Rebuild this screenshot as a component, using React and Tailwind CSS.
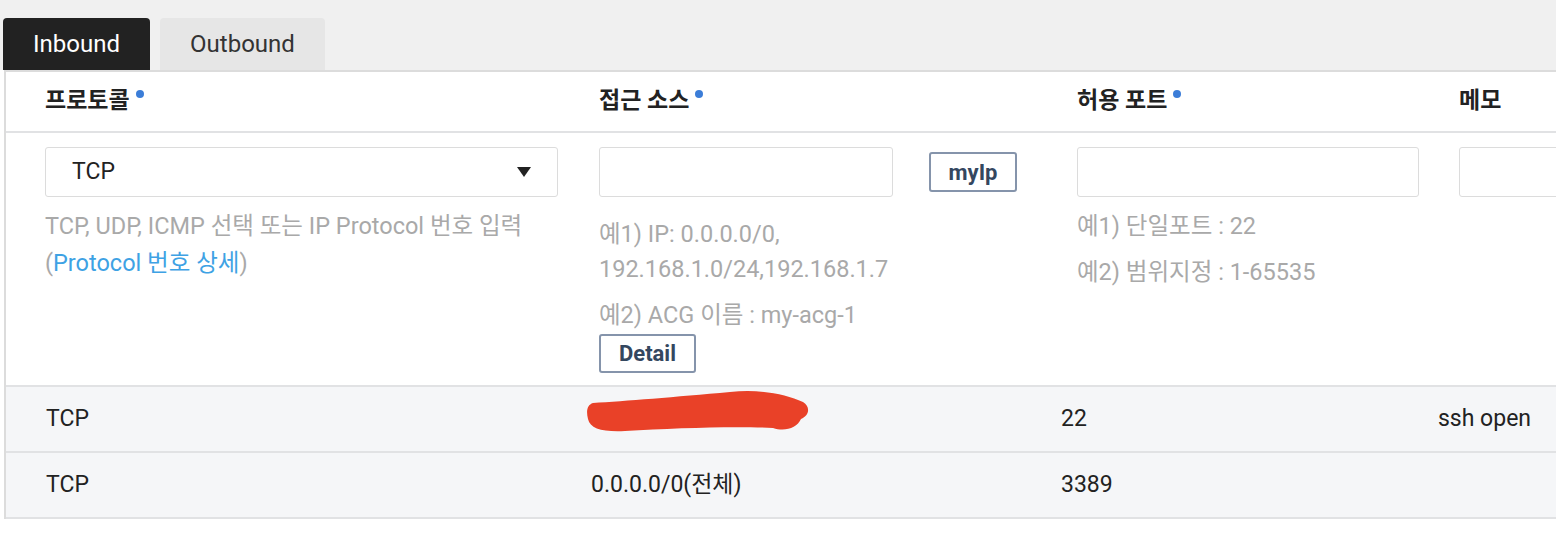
import React from "react";

const FONT = { fontFamily: "Roboto, 'Noto Sans CJK KR', sans-serif" };

function Dot() {
  return <span className="ml-[6px] mt-[-15px] inline-block h-2 w-2 rounded-full bg-[#3b7dd8]" />;
}

function HeadCell({ children, dot }) {
  return (
    <div className="flex items-center text-[23px] font-bold text-[#222]">
      <span>{children}</span>
      {dot && <Dot />}
    </div>
  );
}

function Input({ className = "" }) {
  return <div className={`h-[50px] rounded-[3px] border border-[#dcdcdc] bg-white ${className}`} />;
}

function OutlineButton({ children, className = "" }) {
  return (
    <button className={`rounded-[3px] border-2 border-[#8594ab] bg-white text-[22px] font-bold text-[#34475f] ${className}`}>
      {children}
    </button>
  );
}

function Scribble() {
  return (
    <svg className="absolute left-[-6px] top-[2px]" width="226" height="46" viewBox="0 0 226 46">
      <path
        d="M8 14 C 40 12, 90 8, 145 3 C 175 0, 200 5, 218 13 C 226 18, 224 27, 216 30 C 212 39, 200 43, 188 39 C 150 37, 90 39, 40 42 C 18 43, 5 40, 3 30 C 1 22, 2 16, 8 14 Z"
        fill="#e94128"
      />
    </svg>
  );
}

function DataRow({ proto, source, port, memo, hidden }) {
  return (
    <div className="grid h-[66px] grid-cols-[545px_470px_377px_1fr] items-center border-b-2 border-[#e1e2e4] bg-[#f5f6f8] pl-[40px] text-[23px] text-[#222]">
      <div>{proto}</div>
      <div className="relative h-full">
        {hidden ? <Scribble /> : <div className="flex h-full items-center">{source}</div>}
      </div>
      <div>{port}</div>
      <div>{memo}</div>
    </div>
  );
}

export default function App() {
  return (
    <div className="h-[546px] w-[1556px] overflow-hidden bg-white" style={FONT}>
      <div className="flex gap-[10px] bg-[#f0f0f0] pl-[3px] pt-[18px]">
        <div className="flex h-[52px] w-[147px] items-center justify-center rounded-t-[4px] bg-[#222] text-[24px] text-white">
          Inbound
        </div>
        <div className="flex h-[52px] w-[165px] items-center justify-center rounded-t-[4px] bg-[#e6e6e6] text-[24px] text-[#333]">
          Outbound
        </div>
      </div>

      <div className="ml-[4px] border-l-2 border-t-2 border-[#dcdcdc]">
        <div className="grid h-[61px] grid-cols-[554px_478px_382px_1fr] items-center border-b-2 border-[#e1e2e4] pl-[39px]">
          <HeadCell dot>프로토콜</HeadCell>
          <HeadCell dot>접근 소스</HeadCell>
          <HeadCell dot>허용 포트</HeadCell>
          <HeadCell>메모</HeadCell>
        </div>

        <div className="grid grid-cols-[554px_478px_382px_1fr] border-b-2 border-[#e1e2e4] pb-[12px] pl-[39px] pt-[14px] text-[23.5px] text-[#a9a9a9]">
          <div>
            <div className="flex h-[50px] w-[513px] items-center justify-between rounded-[3px] border border-[#dcdcdc] pl-[26px] pr-[26px] text-[23px] text-[#222]">
              <span>TCP</span>
              <svg width="14" height="10" viewBox="0 0 14 10">
                <path d="M0 0 H14 L7 10 Z" fill="#222" />
              </svg>
            </div>
            <p className="mt-[11px] whitespace-nowrap leading-[37px]">
              TCP, UDP, ICMP 선택 또는 IP Protocol 번호 입력
              <br />(<span className="text-[#3ea2e4]">Protocol 번호 상세</span>)
            </p>
          </div>

          <div>
            <div className="flex items-center">
              <Input className="w-[294px]" />
              <OutlineButton className="ml-[36px] h-[40px] w-[88px]">myIp</OutlineButton>
            </div>
            <p className="mt-[20px] whitespace-nowrap leading-[35px]">
              예1) IP: 0.0.0.0/0,
              <br />
              192.168.1.0/24,192.168.1.7
            </p>
            <p className="mt-[11px] leading-[35px]">예2) ACG 이름 : my-acg-1</p>
            <OutlineButton className="mt-[1px] h-[39px] w-[97px]">Detail</OutlineButton>
          </div>

          <div>
            <Input className="w-[342px]" />
            <p className="mt-[11px] leading-[36px]">예1) 단일포트 : 22</p>
            <p className="mt-[10px] leading-[36px]">예2) 범위지정 : 1-65535</p>
          </div>

          <div>
            <Input className="w-[200px]" />
          </div>
        </div>

        <DataRow proto="TCP" hidden port="22" memo="ssh open" />
        <DataRow proto="TCP" source="0.0.0.0/0(전체)" port="3389" memo="" />
      </div>
    </div>
  );
}
